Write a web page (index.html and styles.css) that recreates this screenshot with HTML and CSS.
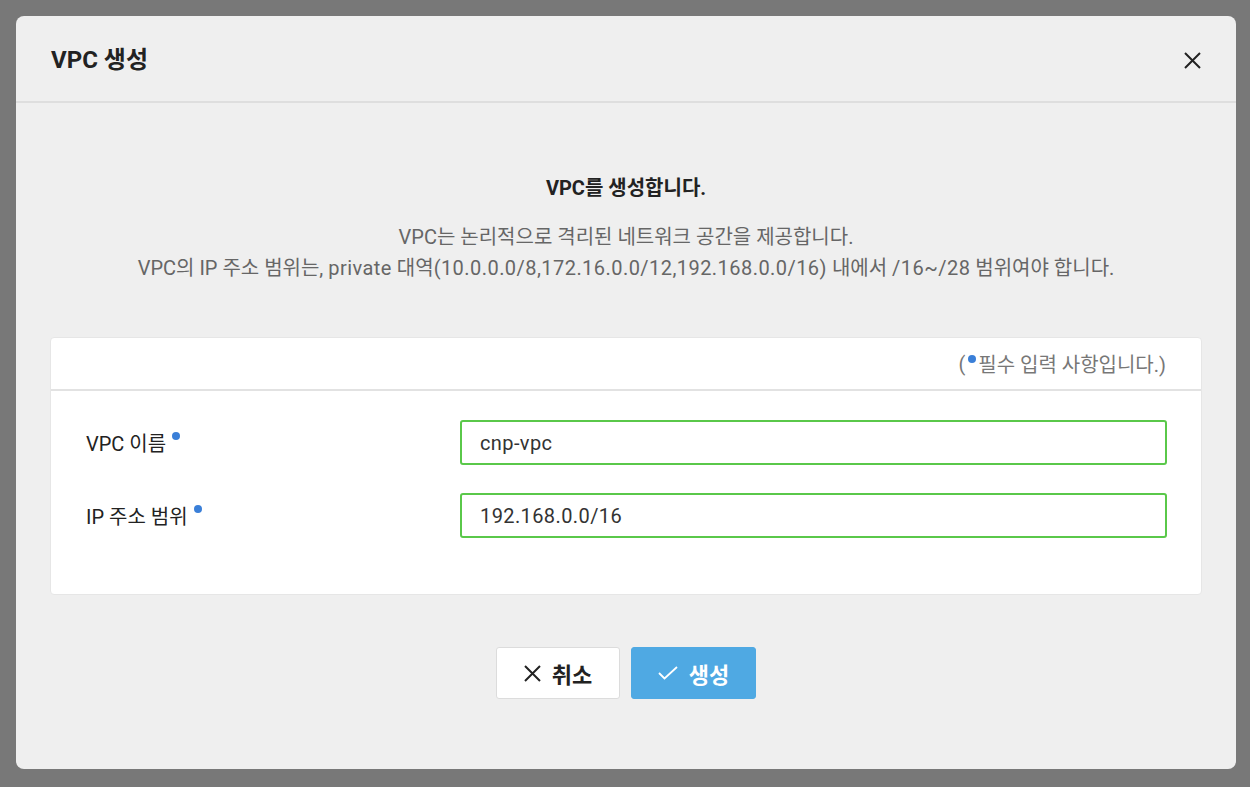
FILE: index.html
```html
<!DOCTYPE html>
<html lang="ko">
<head>
<meta charset="utf-8">
<link rel="stylesheet" href="styles.css">
</head>
<body>
<div class="overlay">
  <div class="modal">
    <div class="modal-header">
      <h1 class="modal-title">VPC 생성</h1>
      <button class="close-btn" aria-label="닫기">
        <svg width="17" height="17" viewBox="0 0 17 17"><path d="M1 1L16 16M16 1L1 16" stroke="#222" stroke-width="2" fill="none"/></svg>
      </button>
    </div>
    <div class="modal-body">
      <div class="intro">
        <p class="intro-title">VPC를 생성합니다.</p>
        <p class="intro-desc">VPC는 논리적으로 격리된 네트워크 공간을 제공합니다.<br>VPC의 IP 주소 범위는, <span class="latin">private</span> 대역<span class="latin">(10.0.0.0/8,172.16.0.0/12,192.168.0.0/16)</span> 내에서 <span class="latin">/16~/28</span> 범위여야 합니다.</p>
      </div>
      <div class="panel">
        <div class="panel-head">(<span class="dot"></span>필수 입력 사항입니다.)</div>
        <div class="panel-body">
          <div class="row">
            <label class="label">VPC 이름<span class="dot sup"></span></label>
            <div class="field"><input class="input" type="text" value="cnp-vpc"></div>
          </div>
          <div class="row">
            <label class="label">IP 주소 범위<span class="dot sup"></span></label>
            <div class="field"><input class="input" type="text" value="192.168.0.0/16"></div>
          </div>
        </div>
      </div>
      <div class="actions">
        <button class="btn btn-cancel">
          <svg width="17" height="17" viewBox="0 0 17 17"><path d="M1 1L16 16M16 1L1 16" stroke="#222" stroke-width="2" fill="none"/></svg>
          취소
        </button>
        <button class="btn btn-primary">
          <svg width="20" height="14" viewBox="0 0 20 14"><path d="M1 7L6.5 12.5L19 1" stroke="#fff" stroke-width="1.8" fill="none"/></svg>
          생성
        </button>
      </div>
    </div>
  </div>
</div>
</body>
</html>
```
FILE: styles.css
```css
* { box-sizing: border-box; }
html, body { margin: 0; padding: 0; }
body {
  background: #787878;
  font-family: Roboto, "Noto Sans CJK KR", sans-serif;
  color: #222;
}
.overlay {
  width: 1250px;
  height: 787px;
  padding: 16px 14px 18px 16px;
}
.modal {
  width: 1220px;
  height: 753px;
  background: #efefef;
  border-radius: 8px;
  display: flex;
  flex-direction: column;
}
.modal-header {
  height: 87px;
  border-bottom: 2px solid #dedede;
  display: flex;
  align-items: center;
  justify-content: space-between;
  padding: 0 35px 0 35px;
}
.modal-title {
  margin: 0;
  font-size: 24px;
  font-weight: 700;
  color: #222;
  position: relative;
  top: -1px;
}
.close-btn {
  border: 0;
  background: none;
  padding: 0;
  width: 17px;
  height: 17px;
  margin-top: 4px;
  cursor: pointer;
  display: flex;
}
.modal-body {
  padding: 0 34px;
}
.intro {
  text-align: center;
  padding-top: 71px;
}
.intro-title {
  margin: 0;
  font-size: 20px;
  font-weight: 700;
  line-height: 28px;
  color: #222;
}
.intro-desc {
  margin: 20px 0 0;
  font-size: 20px;
  line-height: 31px;
  color: #666;
}
.latin {
  letter-spacing: 0.45px;
}
.panel {
  margin-top: 53px;
  background: #fff;
  border-radius: 4px;
  border: 1px solid #e6e6e6;
  height: 258px;
}
.panel-head {
  height: 53px;
  border-bottom: 2px solid #e2e2e2;
  display: flex;
  align-items: center;
  justify-content: flex-end;
  padding-right: 35px;
  font-size: 20px;
  color: #777;
}
.dot {
  display: inline-block;
  width: 8px;
  height: 8px;
  border-radius: 50%;
  background: #3a7fd8;
  margin: 0 2px 0 3px;
  position: relative;
  top: -5px;
}
.panel-body {
  padding: 29px 34px 0 35px;
  display: flex;
  flex-direction: column;
  gap: 28px;
}
.row {
  display: flex;
  align-items: center;
  height: 45px;
}
.label {
  width: 374px;
  font-size: 20px;
  color: #222;
}
.dot.sup {
  top: -11px;
  margin-left: 6px;
}
.field { flex: 1; }
.input {
  width: 100%;
  height: 45px;
  border: 2px solid #5ac84a;
  border-radius: 3px;
  padding: 0 18px;
  font-family: Roboto, "Noto Sans CJK KR", sans-serif;
  font-size: 20px;
  letter-spacing: 0.4px;
  color: #333;
  background: #fff;
  outline: none;
}
.actions {
  display: flex;
  justify-content: center;
  gap: 11px;
  margin-top: 52px;
}
.btn {
  height: 52px;
  width: 125px;
  border-radius: 3px;
  font-family: Roboto, "Noto Sans CJK KR", sans-serif;
  font-size: 22px;
  font-weight: 700;
  display: flex;
  align-items: center;
  justify-content: center;
  gap: 11px;
  cursor: pointer;
  padding: 0;
}
.btn-cancel {
  background: #fff;
  border: 1px solid #dcdcdc;
  color: #222;
  width: 124px;
}
.btn-primary {
  background: #4fa9e3;
  border: 1px solid #4fa9e3;
  color: #fff;
}
```
